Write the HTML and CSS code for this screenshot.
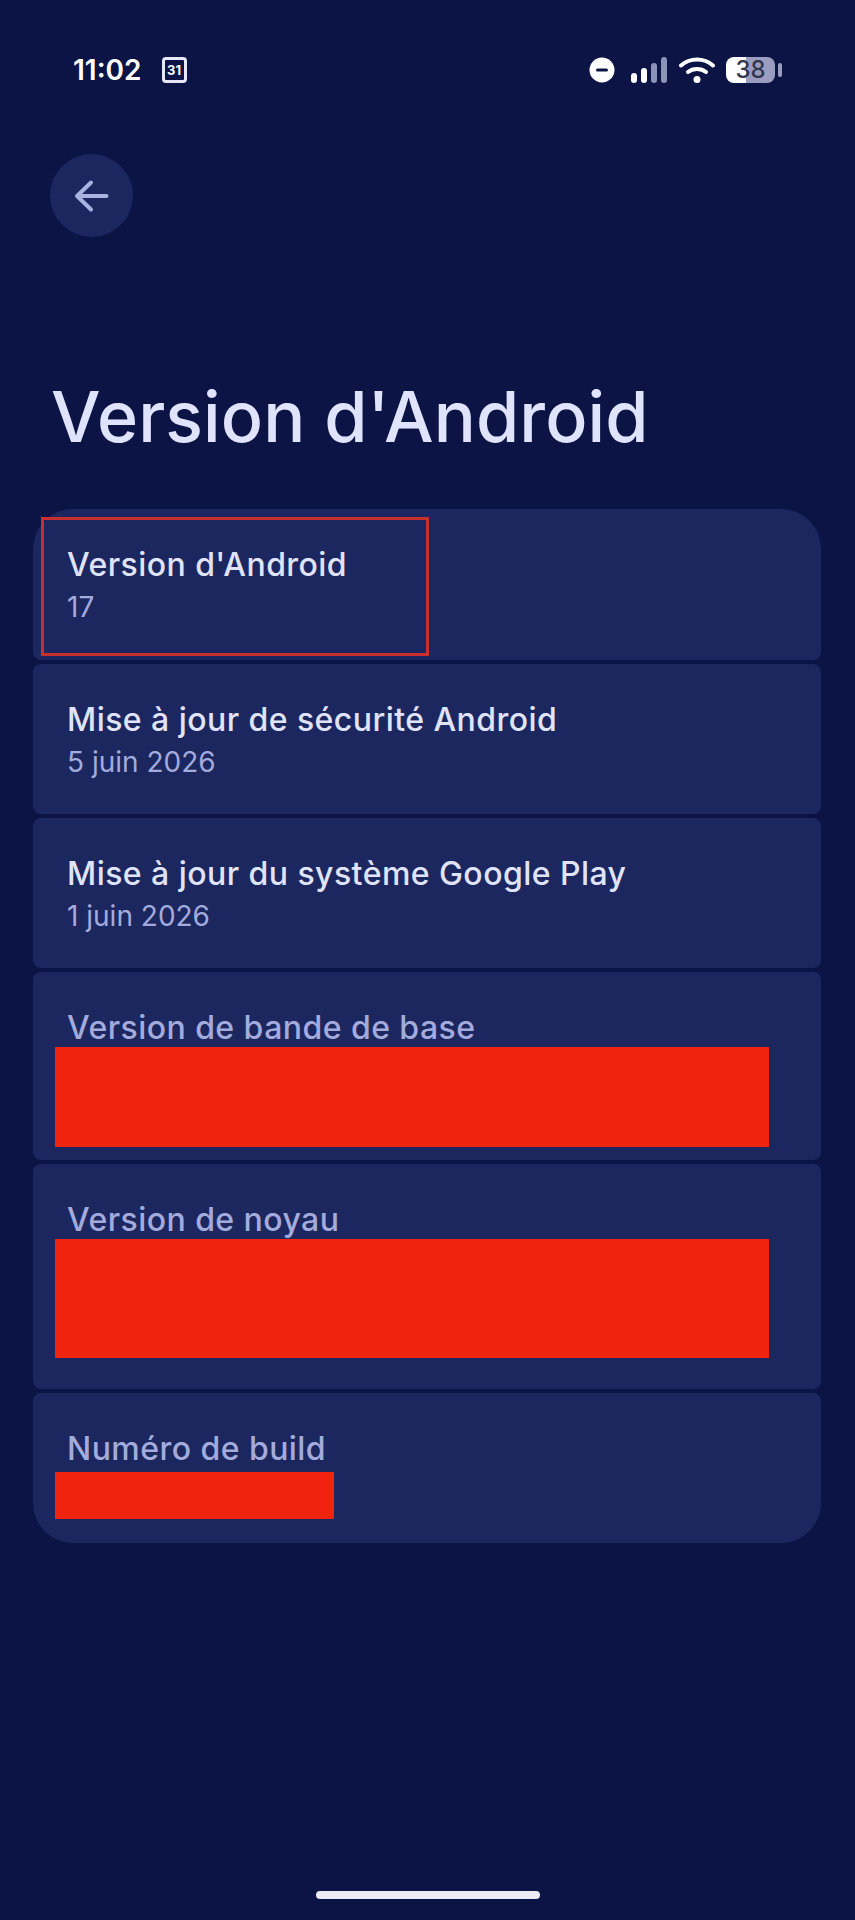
FILE: index.html
```html
<!DOCTYPE html>
<html lang="fr">
<head>
    <meta charset="UTF-8">
    <meta name="viewport" content="width=device-width, initial-scale=1.0">
    <title>Version d'Android</title>
    <link rel="stylesheet" href="styles.css">
</head>
<body>
<div class="screen">

    <!-- barre d'etat -->
    <div class="status">
        <span class="clock">11:02</span>
        <span class="cal">31</span>
        <div class="status-right">
            <svg class="dnd" width="26" height="26" viewBox="0 0 26 26">
                <circle cx="13" cy="13" r="12.500" fill="#fff"/>
                <rect x="7" y="11.500" width="12" height="3" rx="1.500" fill="#0b1343"/>
            </svg>
            <svg class="signal" width="37" height="26" viewBox="0 0 37 26">
                <rect x="0" y="16" width="6" height="10" rx="3" fill="#fff"/>
                <rect x="10" y="11" width="6" height="15" rx="3" fill="#fff"/>
                <rect x="20" y="6" width="6" height="20" rx="3" fill="#8d92b8"/>
                <rect x="30" y="0" width="6" height="26" rx="3" fill="#8d92b8"/>
            </svg>
            <svg class="wifi" width="36" height="26" viewBox="0 0 36 26">
                <path d="M2 8.500 C11 0.500 25 0.500 34 8.500" fill="none" stroke="#fff" stroke-width="4" stroke-linecap="round"/>
                <path d="M9 15 C14 11 22 11 27 15" fill="none" stroke="#fff" stroke-width="4" stroke-linecap="round"/>
                <circle cx="18" cy="22.500" r="3.500" fill="#fff"/>
            </svg>
            <div class="battery">
                <span class="battery-level">38</span>
            </div>
            <span class="battery-nub"></span>
        </div>
    </div>

    <button class="back" aria-label="Retour">
        <svg width="36" height="36" viewBox="0 0 36 36">
            <path d="M32.500 18 H4 M17 4.500 L3 18 L17 31.500" fill="none" stroke="#aab2e2" stroke-width="4" stroke-linecap="round" stroke-linejoin="round"/>
        </svg>
    </button>

    <h1 class="page-title">Version d'Android</h1>

    <div class="list">
        <div class="card card-first">
            <div class="card-title">Version d'Android</div>
            <div class="card-sub">17</div>
            <div class="highlight"></div>
        </div>
        <div class="card">
            <div class="card-title">Mise à jour de sécurité Android</div>
            <div class="card-sub">5 juin 2026</div>
        </div>
        <div class="card">
            <div class="card-title">Mise à jour du système Google Play</div>
            <div class="card-sub">1 juin 2026</div>
        </div>
        <div class="card card-off">
            <div class="card-title">Version de bande de base</div>
            <div class="redacted redacted-base"></div>
        </div>
        <div class="card card-off">
            <div class="card-title">Version de noyau</div>
            <div class="redacted redacted-noyau"></div>
        </div>
        <div class="card card-off card-last">
            <div class="card-title">Numéro de build</div>
            <div class="redacted redacted-build"></div>
        </div>
    </div>

    <div class="home-pill"></div>
</div>
</body>
</html>
```

FILE: styles.css
```css
* {
    box-sizing: border-box;
}

body {
    margin: 0;
    background: #0c1445;
    font-family: Inter, "Liberation Sans", sans-serif;
}

.screen {
    height: 1920px;
    display: flex;
    flex-direction: column;
    overflow: hidden;
}

/* barre d'etat */
.status {
    display: flex;
    align-items: center;
    height: 36px;
    margin-top: 52px;
    padding: 0 73px;
    color: #fff;
}

.clock {
    font-size: 28px;
    font-weight: 600;
}

.cal {
    display: flex;
    align-items: center;
    justify-content: center;
    width: 25px;
    height: 26px;
    margin-left: 20px;
    border: 3px solid #e6e8f8;
    border-radius: 4px;
    font-size: 13px;
    font-weight: 700;
}

.status-right {
    display: flex;
    align-items: center;
    margin-left: auto;
}

.signal {
    margin-left: 16px;
}

.wifi {
    margin-left: 11px;
}

.battery {
    width: 49px;
    height: 26px;
    margin-left: 11px;
    border-radius: 8px;
    background: linear-gradient(to right, #fff 0 40%, #9a9dc0 40% 100%);
}

.battery-level {
    display: block;
    text-align: center;
    font-size: 24px;
    font-weight: 500;
    line-height: 26px;
    color: #33364f;
}

.battery-nub {
    width: 4px;
    height: 14px;
    margin-left: 3px;
    border-radius: 2px;
    background: #9a9dc0;
}

/* retour */
.back {
    display: flex;
    align-items: center;
    justify-content: center;
    width: 83px;
    height: 83px;
    margin: 66px 0 0 50px;
    padding: 0;
    border: none;
    border-radius: 50%;
    background: #1c2760;
}

.page-title {
    margin: 140px 0 52px 51px;
    font-size: 70px;
    font-weight: 500;
    letter-spacing: 0.1px;
    line-height: 80px;
    color: #dfe3fb;
}

.list {
    display: flex;
    flex-direction: column;
    gap: 4px;
    margin: 0 34px 0 33px;
}

.card {
    position: relative;
    min-height: 150px;
    padding: 35px 20px 14px 34px;
    border-radius: 8px;
    background: #1c2760;
}

.card-first {
    min-height: 151px;
    border-radius: 40px 40px 8px 8px;
}

.card-last {
    border-radius: 8px 8px 40px 40px;
}

.card-title {
    font-size: 32px;
    font-weight: 500;
    letter-spacing: 0.45px;
    line-height: 42px;
    color: #e0e4fb;
}

.card-sub {
    margin-top: 2px;
    font-size: 28px;
    line-height: 38px;
    color: #a3abdc;
}

.card-off .card-title {
    color: #a3abdc;
}

/* masques rouges */
.redacted {
    margin-left: -12px;
    background: #f0240e;
}

.redacted-base {
    width: 714px;
    height: 100px;
    margin-top: -2px;
    margin-bottom: -1px;
}

.redacted-noyau {
    width: 714px;
    height: 119px;
    margin-top: -2px;
    margin-bottom: 17px;
}

.redacted-build {
    width: 279px;
    height: 47px;
    margin-top: 2px;
}

.highlight {
    position: absolute;
    top: 8px;
    left: 8px;
    width: 388px;
    height: 139px;
    border: 3px solid #c8302f;
}

.home-pill {
    width: 224px;
    height: 8px;
    margin: auto auto 21px;
    border-radius: 4px;
    background: #ececf6;
}
```
